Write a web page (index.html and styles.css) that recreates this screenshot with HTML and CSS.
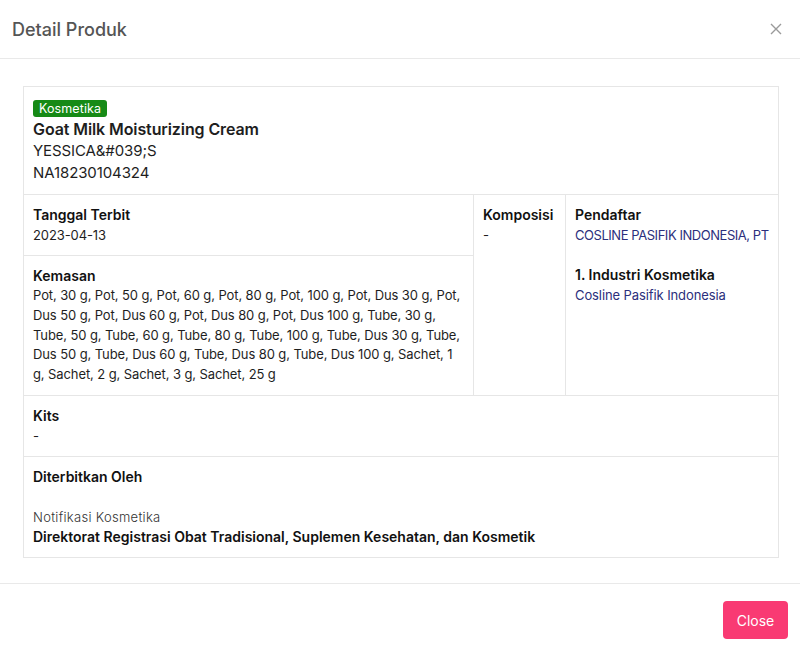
FILE: index.html
```html
<!DOCTYPE html>
<html lang="id">
<head>
  <meta charset="UTF-8">
  <meta name="viewport" content="width=device-width, initial-scale=1.0">
  <title>Detail Produk</title>
  <link rel="stylesheet" href="styles.css">
</head>
<body>

  <div class="modal">
    <div class="modal-header">
      <h5 class="modal-title">Detail Produk</h5>
      <button class="btn-x" aria-label="Close">
        <svg width="12" height="12" viewBox="0 0 12 12"><path d="M1 1L11 11M11 1L1 11" stroke="#9a9a9a" stroke-width="1.4" fill="none"/></svg>
      </button>
    </div>

    <div class="modal-body">
      <table class="detail">
        <colgroup>
          <col class="c1">
          <col class="c2">
          <col class="c3">
        </colgroup>
        <tr>
          <td colspan="3" class="head-cell">
            <span class="badge">Kosmetika</span>
            <div class="product-name">Goat Milk Moisturizing Cream</div>
            <div class="product-line">YESSICA&amp;#039;S</div>
            <div class="product-line">NA18230104324</div>
          </td>
        </tr>
        <tr>
          <td>
            <div class="label">Tanggal Terbit</div>
            <div>2023-04-13</div>
          </td>
          <td rowspan="2">
            <div class="label">Komposisi</div>
            <div>-</div>
          </td>
          <td rowspan="2">
            <div class="label">Pendaftar</div>
            <div class="link caps">COSLINE PASIFIK INDONESIA, PT</div>
            <div class="label spaced">1. Industri Kosmetika</div>
            <div class="link">Cosline Pasifik Indonesia</div>
          </td>
        </tr>
        <tr>
          <td>
            <div class="label">Kemasan</div>
            <div class="long">Pot, 30 g, Pot, 50 g, Pot, 60 g, Pot, 80 g, Pot, 100 g, Pot, Dus 30 g, Pot, Dus 50 g, Pot, Dus 60 g, Pot, Dus 80 g, Pot, Dus 100 g, Tube, 30 g, Tube, 50 g, Tube, 60 g, Tube, 80 g, Tube, 100 g, Tube, Dus 30 g, Tube, Dus 50 g, Tube, Dus 60 g, Tube, Dus 80 g, Tube, Dus 100 g, Sachet, 1 g, Sachet, 2 g, Sachet, 3 g, Sachet, 25 g</div>
          </td>
        </tr>
        <tr>
          <td colspan="3">
            <div class="label">Kits</div>
            <div>-</div>
          </td>
        </tr>
        <tr>
          <td colspan="3">
            <div class="label">Diterbitkan Oleh</div>
            <div class="spaced light">Notifikasi Kosmetika</div>
            <div class="label">Direktorat Registrasi Obat Tradisional, Suplemen Kesehatan, dan Kosmetik</div>
          </td>
        </tr>
      </table>
    </div>

    <div class="modal-footer">
      <button class="btn-close">Close</button>
    </div>
  </div>

</body>
</html>
```

FILE: styles.css
```css
body {
  margin: 0;
  font-family: Inter, "Open Sans", sans-serif;
  color: #1e1e1e;
  background: #fff;
}

.modal {
  width: 800px;
  height: 653px;
  display: flex;
  flex-direction: column;
}

.modal-header {
  height: 59px;
  display: flex;
  align-items: center;
  justify-content: space-between;
  padding: 0 18px 0 12px;
  border-bottom: 1px solid #e9e9e9;
  box-sizing: border-box;
}

.modal-title {
  margin: 0;
  font-size: 18px;
  font-weight: 500;
  color: #555;
}

.btn-x {
  border: none;
  background: none;
  padding: 0;
  display: flex;
}

.modal-body {
  padding: 27px 22px 25px 23px;
  border-bottom: 1px solid #e9e9e9;
}

.detail {
  width: 755px;
  border-collapse: collapse;
  table-layout: fixed;
  font-size: 13px;
  line-height: 20px;
  letter-spacing: -0.1px;
}

.c1 { width: 450px; }
.c2 { width: 92px; }
.c3 { width: 213px; }

.detail td {
  border: 1px solid #e6e6e6;
  padding: 10px 9px;
  vertical-align: top;
}

.detail td.head-cell {
  padding-top: 11px;
  padding-bottom: 10px;
}

.badge {
  display: inline-block;
  background: #168a16;
  color: #fff;
  font-size: 12.5px;
  line-height: 17px;
  padding: 0 6px;
  border-radius: 3px;
  letter-spacing: 0.1px;
}

.product-name {
  font-size: 16px;
  font-weight: 600;
  line-height: 22px;
}

.product-line {
  font-size: 15px;
  line-height: 22px;
}

.label {
  font-size: 14px;
  font-weight: 600;
  color: #111;
  letter-spacing: 0;
}

.long {
  line-height: 19.8px;
}

.spaced {
  margin-top: 20px;
}

.link {
  color: #2c2f7c;
}

.caps {
  letter-spacing: -0.45px;
  white-space: nowrap;
}

.light {
  font-weight: 300;
  color: #333;
  letter-spacing: 0.3px;
}

.modal-footer {
  flex: 1;
  display: flex;
  align-items: center;
  justify-content: flex-end;
  padding: 4px 12px 0;
}

.btn-close {
  background: #f93a73;
  color: #fff;
  border: none;
  border-radius: 4px;
  font-family: inherit;
  font-size: 14px;
  width: 65px;
  height: 38px;
}
```
